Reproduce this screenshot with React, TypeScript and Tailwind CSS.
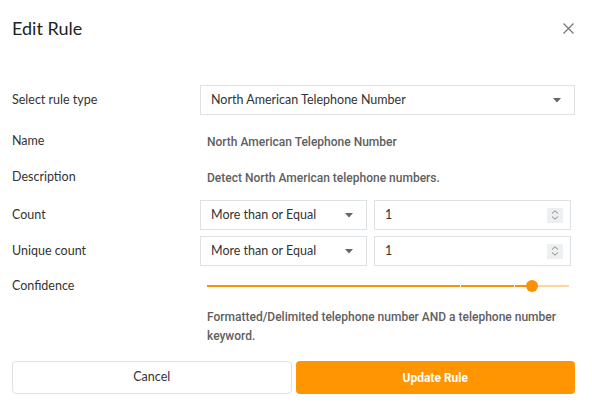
import React from "react";

const labelFont = "font-['Lato','Noto_Sans',sans-serif]";
const valueFont = "font-['Roboto',sans-serif]";

function Caret() {
  return (
    <svg width="8" height="5" viewBox="0 0 8 5" className="shrink-0">
      <path d="M0 0h8L4 4.5z" fill="#666" />
    </svg>
  );
}

function SelectBox({ value, className }: { value: string; className?: string }) {
  return (
    <div
      className={`flex items-center justify-between h-[30px] border border-[#dde2e6] bg-white pl-[10px] pr-[13px] text-[12.5px] text-[#333] ${labelFont} ${className ?? ""}`}
    >
      <span>{value}</span>
      <Caret />
    </div>
  );
}

function NumberBox({ value }: { value: string }) {
  return (
    <div
      className={`flex items-center justify-between h-[30px] w-[197px] border border-[#dde2e6] bg-white pl-[10px] pr-[7px] text-[12.5px] text-[#333] ${labelFont}`}
    >
      <span>{value}</span>
      <div className="flex flex-col items-center justify-center w-[16px] h-[15px] bg-[#eeeff0] gap-[2px]">
        <svg width="8" height="4" viewBox="0 0 8 4">
          <path d="M1 3.5L4 .8 7 3.5" fill="none" stroke="#888" strokeWidth="1" />
        </svg>
        <svg width="8" height="4" viewBox="0 0 8 4">
          <path d="M1 .5L4 3.2 7 .5" fill="none" stroke="#888" strokeWidth="1" />
        </svg>
      </div>
    </div>
  );
}

function Row({ label, children, h }: { label: string; children: React.ReactNode; h: string }) {
  return (
    <div className={`flex items-center ${h}`}>
      <div className={`w-[188px] shrink-0 text-[12.5px] text-[#333] ${labelFont}`}>{label}</div>
      <div className="flex-1 flex items-center">{children}</div>
    </div>
  );
}

function Slider() {
  return (
    <div className="relative w-[362px] h-[14px] ml-[7px]">
      <div className="absolute left-0 top-[6px] h-[2px] w-[253px] bg-[#ff9000]" />
      <div className="absolute left-[254px] top-[6px] h-[2px] w-[53px] bg-[#ff9000]" />
      <div className="absolute left-[308px] top-[6px] h-[2px] w-[18px] bg-[#ff9000]" />
      <div className="absolute left-[326px] top-[6px] h-[2px] w-[36px] bg-[#ffd49a]" />
      <div className="absolute left-[319px] top-[1px] w-[12px] h-[12px] rounded-full bg-[#ff9000]" />
    </div>
  );
}

export default function App() {
  return (
    <div className="w-[592px] h-[406px] bg-white relative overflow-hidden">
      <div className="flex items-center justify-between h-[56px] pl-[12px] pr-[18px]">
        <h1 className={`text-[18px] text-[#222] ${labelFont}`}>Edit Rule</h1>
        <svg width="11" height="11" viewBox="0 0 11 11">
          <path d="M.5.5l10 10M10.5.5l-10 10" stroke="#777" strokeWidth="1.2" />
        </svg>
      </div>

      <div className="pl-[12px] pr-[17px] pt-[29px]">
        <Row label="Select rule type" h="h-[30px]">
          <SelectBox value="North American Telephone Number" className="w-full" />
        </Row>
        <Row label="Name" h="h-[21px] mt-[16px]">
          <span className={`pl-[7px] text-[12px] font-medium text-[#606060] ${valueFont}`}>
            North American Telephone Number
          </span>
        </Row>
        <Row label="Description" h="h-[21px] mt-[15px]">
          <span className={`pl-[7px] text-[12px] font-medium text-[#606060] ${valueFont}`}>
            Detect North American telephone numbers.
          </span>
        </Row>
        <Row label="Count" h="h-[30px] mt-[12px]">
          <div className="flex gap-[7px]">
            <SelectBox value="More than or Equal" className="w-[167px]" />
            <NumberBox value="1" />
          </div>
        </Row>
        <Row label="Unique count" h="h-[30px] mt-[6px]">
          <div className="flex gap-[7px]">
            <SelectBox value="More than or Equal" className="w-[167px]" />
            <NumberBox value="1" />
          </div>
        </Row>
        <Row label="Confidence" h="h-[14px] mt-[13px]">
          <Slider />
        </Row>
        <div className="flex mt-[15px]">
          <div className="w-[188px] shrink-0" />
          <p className={`pl-[7px] w-[360px] text-[12px] leading-[19px] font-medium text-[#606060] ${valueFont}`}>
            Formatted/Delimited telephone number AND a telephone number keyword.
          </p>
        </div>
        <div className="flex gap-[4px] mt-[15px]">
          <button className={`w-[280px] h-[33px] rounded-[4px] border border-[#dde2e6] bg-white text-[12.5px] text-[#333] ${labelFont}`}>
            Cancel
          </button>
          <button className={`w-[280px] h-[33px] rounded-[4px] bg-[#ff9500] text-[12px] font-bold text-white ${valueFont}`}>
            Update Rule
          </button>
        </div>
      </div>
    </div>
  );
}
